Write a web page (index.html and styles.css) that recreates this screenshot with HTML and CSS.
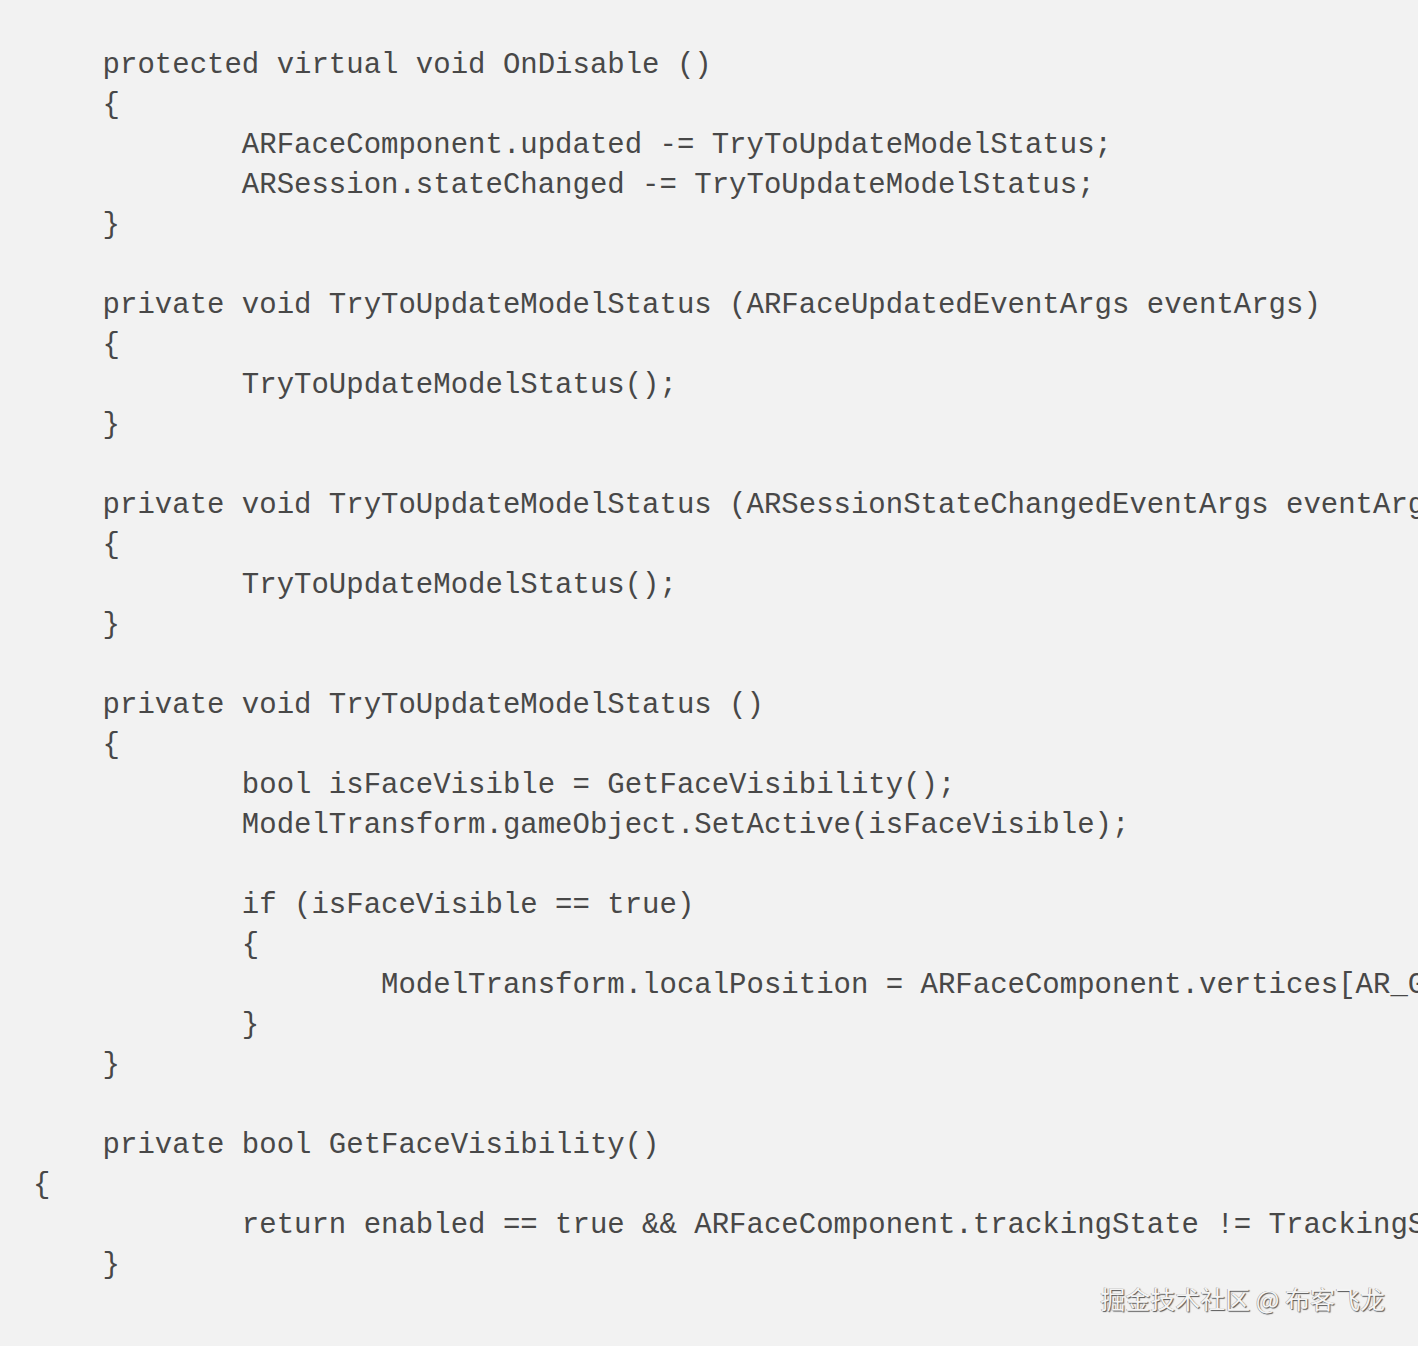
FILE: index.html
```html
<!DOCTYPE html>
<html>
<head>
<meta charset="utf-8">
<link rel="stylesheet" href="styles.css">
</head>
<body>
<div class="page">
<pre class="code">    protected virtual void OnDisable ()
    {
            ARFaceComponent.updated -= TryToUpdateModelStatus;
            ARSession.stateChanged -= TryToUpdateModelStatus;
    }

    private void TryToUpdateModelStatus (ARFaceUpdatedEventArgs eventArgs)
    {
            TryToUpdateModelStatus();
    }

    private void TryToUpdateModelStatus (ARSessionStateChangedEventArgs eventArgs)
    {
            TryToUpdateModelStatus();
    }

    private void TryToUpdateModelStatus ()
    {
            bool isFaceVisible = GetFaceVisibility();
            ModelTransform.gameObject.SetActive(isFaceVisible);

            if (isFaceVisible == true)
            {
                    ModelTransform.localPosition = ARFaceComponent.vertices[AR_Generated];
            }
    }

    private bool GetFaceVisibility()
{
            return enabled == true &amp;&amp; ARFaceComponent.trackingState != TrackingState.Tracking;
    }</pre>
<div class="watermark">掘金技术社区 @ 布客飞龙</div>
</div>
</body>
</html>
```

FILE: styles.css
```css
html, body {
  margin: 0;
  padding: 0;
  background: #f2f2f2;
}

.page {
  position: relative;
  width: 1418px;
  height: 1346px;
  overflow: hidden;
  background: #f2f2f2;
}

.code {
  margin: 0;
  padding: 46px 0 0 33px;
  font-family: "Liberation Mono", "Courier New", monospace;
  font-size: 29px;
  line-height: 40px;
  color: #484848;
  white-space: pre;
  overflow: hidden;
}

.watermark {
  position: absolute;
  right: 33px;
  top: 1281px;
  font-family: "Noto Sans CJK SC", "Noto Sans", sans-serif;
  font-size: 25px;
  line-height: 34px;
  color: #f4f4f4;
  text-shadow: 1px 1px 1px #555, -0.5px -0.5px 0 #999;
}
```
